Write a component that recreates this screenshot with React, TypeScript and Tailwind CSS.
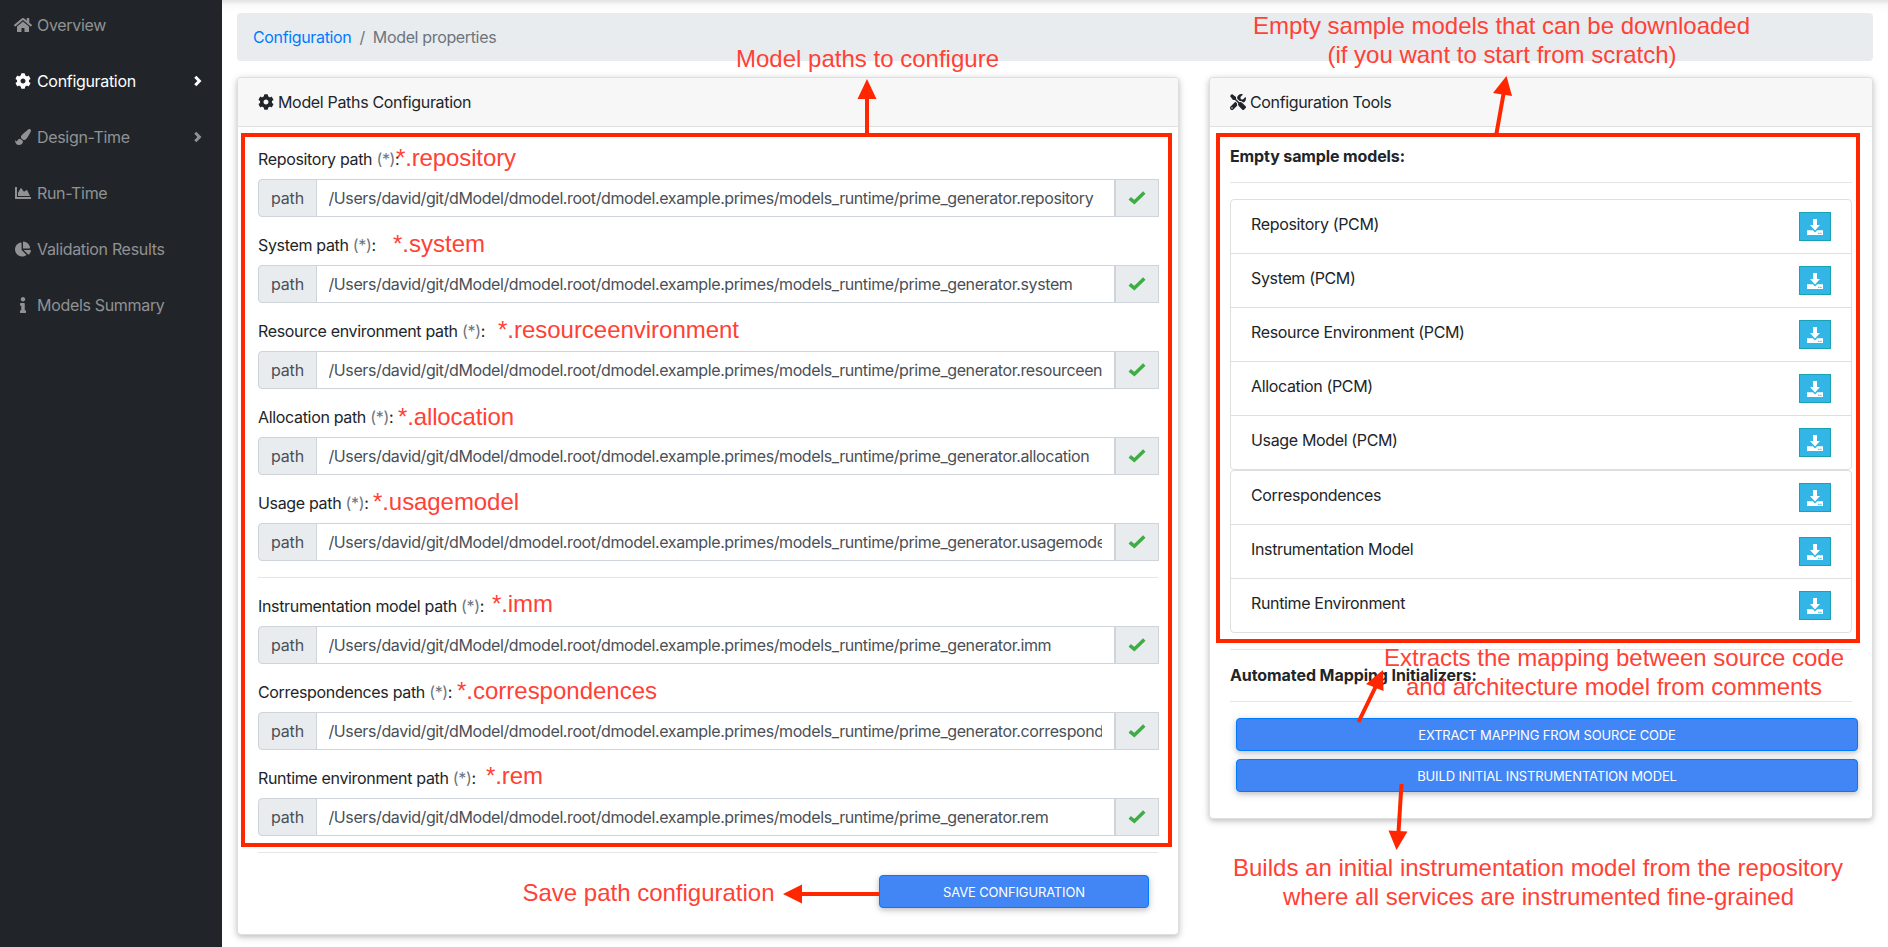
import React from "react";
import {
  FaChartArea,
  FaChartPie,
  FaCog,
  FaHome,
  FaInfo,
  FaPaintBrush,
  FaTools,
} from "react-icons/fa";

const base = "/Users/david/git/dModel/dmodel.root/dmodel.example.primes/models_runtime/prime_generator.";

const navItems = [
  { label: "Overview", icon: FaHome, size: 18 },
  { label: "Configuration", icon: FaCog, size: 16, active: true, arrow: true },
  { label: "Design-Time", icon: FaPaintBrush, size: 16, arrow: true },
  { label: "Run-Time", icon: FaChartArea, size: 16 },
  { label: "Validation Results", icon: FaChartPie, size: 16 },
  { label: "Models Summary", icon: FaInfo, size: 16 },
];

const runtimePaths = [
  { label: "Repository path", ext: "repository" },
  { label: "System path", ext: "system" },
  { label: "Resource environment path", ext: "resourceenvironment" },
  { label: "Allocation path", ext: "allocation" },
  { label: "Usage path", ext: "usagemodel" },
];

const mappingPaths = [
  { label: "Instrumentation model path", ext: "imm" },
  { label: "Correspondences path", ext: "correspondences" },
  { label: "Runtime environment path", ext: "rem" },
];

const pcmModels = [
  "Repository (PCM)",
  "System (PCM)",
  "Resource Environment (PCM)",
  "Allocation (PCM)",
  "Usage Model (PCM)",
];
const otherModels = ["Correspondences", "Instrumentation Model", "Runtime Environment"];

const cardClass =
  "rounded border border-[#dfdfdf] bg-white shadow-[0_2px_5px_0_rgba(0,0,0,0.16),0_2px_10px_0_rgba(0,0,0,0.12)]";
const buttonClass =
  "flex h-[33px] items-center justify-center rounded border border-[#007bff] bg-[#4285f4] text-[13px] tracking-[-0.15px] text-white shadow-[0_2px_5px_0_rgba(0,0,0,0.16),0_2px_10px_0_rgba(0,0,0,0.12)]";

function CheckIcon() {
  return (
    <svg width="18" height="14" viewBox="0 0 18 14" fill="none" stroke="currentColor" strokeWidth="3.5">
      <path d="M1.700 7.300 6.300 11.200 16.300 1.400" />
    </svg>
  );
}

function ChevronIcon() {
  return (
    <svg className="ml-auto" width="8" height="12" viewBox="0 0 8 12" fill="none" stroke="currentColor" strokeWidth="3">
      <path d="M1.300 1.700 5.400 6 1.300 10.300" />
    </svg>
  );
}

function DownloadIcon() {
  return (
    <svg width="16" height="16" viewBox="0 0 16 16" fill="currentColor">
      <path d="M6 0h4v6h3L8 11.500 3 6h3z" />
      <path
        fillRule="evenodd"
        d="M0 11.300h5.800L8 13.500l2.200-2.200H16V16H0zM11.200 13.700v1.200h1.200v-1.200zM13.300 13.700v1.200h1.200v-1.200z"
      />
    </svg>
  );
}

function Sidebar() {
  return (
    <nav className="h-full w-[222px] shrink-0 bg-[#212529]">
      <ul className="-mt-[3px]">
        {navItems.map(({ label, icon: Icon, size, active, arrow }) => (
          <li
            key={label}
            className={`flex h-14 items-center pl-[13px] pr-[20px] ${active ? "text-white" : "text-[#909294]"}`}
          >
            <span className="flex w-5 justify-center">
              <Icon size={size} />
            </span>
            <span className="ml-1 tracking-[-0.32px]">{label}</span>
            {arrow && <ChevronIcon />}
          </li>
        ))}
      </ul>
    </nav>
  );
}

function PathField({ label, ext }: { label: string; ext: string }) {
  return (
    <div className="mb-4">
      <div className="mb-2 h-6 tracking-[-0.33px]">
        {label} <span className="text-[#6c757d]">(*)</span>:
      </div>
      <div className="-mr-px flex h-[38px] text-[#495057]">
        <span className="flex w-[59px] items-center justify-center rounded-l border border-[#ced4da] bg-[#e9ecef] tracking-[-0.2px]">
          path
        </span>
        <div className="-ml-px flex min-w-0 flex-1 items-center border border-[#ced4da] bg-white pl-[11.5px] pr-3">
          <span className="w-full overflow-hidden whitespace-nowrap tracking-[-0.4px]">
            {base}
            {ext}
          </span>
        </div>
        <span className="flex w-11 items-center justify-center border border-[#ced4da] bg-[#e9ecef] text-[#3fad46]">
          <CheckIcon />
        </span>
      </div>
    </div>
  );
}

function ModelList({ items }: { items: string[] }) {
  return (
    <ul className="rounded-sm border border-[#dfdfdf]">
      {items.map((name, i) => (
        <li
          key={name}
          className={`flex items-start justify-between px-5 pt-3 ${i ? "h-[54px] border-t border-[#dfdfdf]" : "h-[53px]"}`}
        >
          <span className="tracking-[-0.35px]">{name}</span>
          <span className="flex h-[29px] w-8 items-center justify-center border border-[#17a2b8] bg-[#33b5e5] text-white">
            <DownloadIcon />
          </span>
        </li>
      ))}
    </ul>
  );
}

function Divider() {
  return <hr className="my-4 border-t border-[#e5e5e5]" />;
}

const red = "#ff2600";

function Note({ x, y, w, children }: { x: number; y: number; w: number; children: string }) {
  return (
    <text x={x} y={y} textLength={w} lengthAdjust="spacing">
      {children}
    </text>
  );
}

function Annotations() {
  return (
    <svg
      className="pointer-events-none absolute left-0 top-0"
      width="1888"
      height="947"
      viewBox="0 0 1888 947"
      fontFamily="Liberation Sans, sans-serif"
      fontSize="24"
      fill="#ff4136"
    >
      <g fill="none" stroke={red} strokeWidth="4">
        <rect x="243" y="135" width="927" height="710" />
        <rect x="1218" y="135" width="640" height="506" />
        <path d="M867 134V98M1496 136L1503.500 94M1358.500 722L1376 686M1401.500 784L1398.500 832M879 894H801" />
      </g>
      <g fill={red}>
        <path d="M867 79L857.500 99H876.500Z" />
        <path d="M1506.500 76L1493 93L1512 96Z" />
        <path d="M1383 670L1366 684L1383.500 691Z" />
        <path d="M1396.500 850L1388.500 830.500L1407.500 831.500Z" />
        <path d="M783 894L802 884.500V903.500Z" />
      </g>
      <Note x={736} y={67} w={263}>Model paths to configure</Note>
      <Note x={1253} y={33.500} w={497}>Empty sample models that can be downloaded</Note>
      <Note x={1327.500} y={62.500} w={349}>(if you want to start from scratch)</Note>
      <Note x={396} y={166} w={120}>*.repository</Note>
      <Note x={393} y={252} w={92}>*.system</Note>
      <Note x={498} y={338} w={241}>*.resourceenvironment</Note>
      <Note x={398} y={425} w={116}>*.allocation</Note>
      <Note x={373} y={510} w={146}>*.usagemodel</Note>
      <Note x={492} y={612} w={61}>*.imm</Note>
      <Note x={457} y={699} w={200}>*.correspondences</Note>
      <Note x={486} y={784} w={57}>*.rem</Note>
      <Note x={522.500} y={901} w={252}>Save path configuration</Note>
      <Note x={1384} y={665.500} w={460}>Extracts the mapping between source code</Note>
      <Note x={1406} y={694.500} w={416}>and architecture model from comments</Note>
      <Note x={1233} y={876} w={610}>Builds an initial instrumentation model from the repository</Note>
      <Note x={1283} y={905} w={511}>where all services are instrumented fine-grained</Note>
    </svg>
  );
}

export default function App() {
  return (
    <div className="relative flex h-[947px] w-[1888px] overflow-hidden bg-white font-[Inter,sans-serif] text-[16px] leading-6 text-[#212529]">
      <Sidebar />
      <div className="flex min-w-0 flex-1 flex-col">
        <div className="h-[13px] bg-gradient-to-b from-[#e2e2e2] via-[#fafafa] via-40% to-white" />
        <main className="pl-[15px] pr-[15px]">
          <ol className="flex h-12 items-center gap-2 rounded bg-[#e9ecef] px-4 tracking-[-0.35px] text-[#6c757d]">
            <li className="text-[#007bff]">Configuration</li>
            <li>/</li>
            <li>Model properties</li>
          </ol>
          <div className="mt-4 flex items-start gap-[30px]">
            <section className={`h-[858px] w-[942px] ${cardClass}`}>
              <h5 className="flex h-[49px] items-center gap-1 rounded-t border-b border-[#dfdfdf] bg-[#f7f7f7] px-5 tracking-[-0.33px]">
                <FaCog size={16} />
                Model Paths Configuration
              </h5>
              <div className="px-5 pt-5">
                {runtimePaths.map((p) => (
                  <PathField key={p.ext} {...p} />
                ))}
                <Divider />
                {mappingPaths.map((p) => (
                  <PathField key={p.ext} {...p} />
                ))}
                <Divider />
                <div className="mr-[9px] mt-[22px] flex justify-end">
                  <button className={`w-[270px] ${buttonClass}`}>SAVE CONFIGURATION</button>
                </div>
              </div>
            </section>
            <section className={`h-[742px] w-[664px] ${cardClass}`}>
              <h5 className="flex h-[49px] items-center gap-1 rounded-t border-b border-[#dfdfdf] bg-[#f7f7f7] px-5 tracking-[-0.35px]">
                <FaTools size={16} />
                Configuration Tools
              </h5>
              <div className="px-5 pt-5">
                <h6 className="h-[19px] font-bold leading-[19px] tracking-[-0.12px]">Empty sample models:</h6>
                <Divider />
                <ModelList items={pcmModels} />
                <ModelList items={otherModels} />
                <Divider />
                <h6 className="h-[19px] font-bold leading-[19px] tracking-[-0.08px]">Automated Mapping Initializers:</h6>
                <Divider />
                <div className="-mr-1.5 ml-1.5 flex flex-col gap-2">
                  <button className={buttonClass}>EXTRACT MAPPING FROM SOURCE CODE</button>
                  <button className={buttonClass}>BUILD INITIAL INSTRUMENTATION MODEL</button>
                </div>
              </div>
            </section>
          </div>
        </main>
      </div>
      <Annotations />
    </div>
  );
}
